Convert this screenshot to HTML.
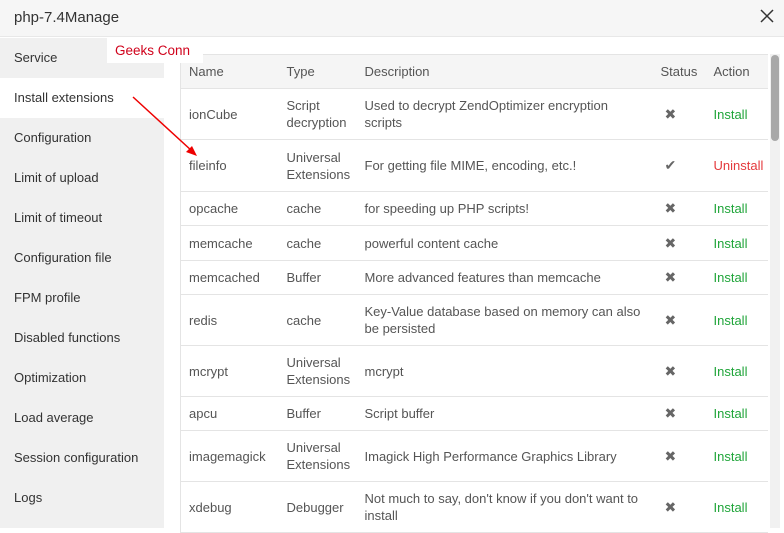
<!DOCTYPE html>
<html><head><style>
*{margin:0;padding:0;box-sizing:border-box}
body{width:784px;height:528px;overflow:hidden;background:#fff;font-family:"Liberation Sans",sans-serif;color:#333;position:relative}
.title{position:absolute;left:0;top:0;width:784px;height:37px;background:#f6f6f6;border-bottom:1px solid #e8e8e8;font-size:15px;line-height:36px;padding-left:14px;color:#333}
.close{position:absolute;right:10px;top:9px}
.side{position:absolute;left:0;top:38px;width:164px;height:490px;background:#f0f0f0}
.side div{height:40px;line-height:40px;padding-left:14px;font-size:13px;color:#333}
.side .on{background:#fff}
.tbl{position:absolute;left:180px;top:54px;width:588px;border-collapse:collapse;font-size:13px;color:#555}
.tbl td,.tbl th{border-bottom:1px solid #e4e4e4;text-align:left;font-weight:normal;padding:0 0 0 8px;line-height:17px;vertical-align:middle}
.tbl th{background:#f5f5f5;height:34px;color:#555;font-size:13px}
.tbl{border-left:1px solid #e4e4e4;border-top:1px solid #e4e4e4}
.g{color:#20a53a}.r{color:#e4393c}
.st{color:#666;font-size:14px;padding-left:12px!important}
.sb{position:absolute;left:770px;top:54px;width:10px;height:474px;background:#f1f1f1}
.sb div{width:8px;margin-left:1px;height:86px;background:#a8a8a8;border-radius:4px;margin-top:1px}
.wm{position:absolute;left:107px;top:38px;width:96px;height:25px;background:#fff;color:#d0021b;font-size:13.5px;line-height:26px;padding-left:8px}
</style></head><body>
<div class="title">php-7.4Manage</div>
<svg class="close" width="14" height="14" viewBox="0 0 14 14"><path d="M1 1L13 13M13 1L1 13" stroke="#333" stroke-width="1.5"/></svg>
<div class="side">
<div>Service</div><div class="on">Install extensions</div><div>Configuration</div><div>Limit of upload</div><div>Limit of timeout</div><div>Configuration file</div><div>FPM profile</div><div>Disabled functions</div><div>Optimization</div><div>Load average</div><div>Session configuration</div><div>Logs</div>
</div>
<table class="tbl">
<colgroup><col style="width:98px"><col style="width:78px"><col style="width:296px"><col style="width:53px"><col></colgroup>
<tr><th>Name</th><th>Type</th><th>Description</th><th>Status</th><th>Action</th></tr>
<tr style="height:51px"><td>ionCube</td><td>Script decryption</td><td>Used to decrypt ZendOptimizer encryption<br>scripts</td><td class="st">✖</td><td class="g">Install</td></tr>
<tr style="height:52px"><td>fileinfo</td><td>Universal Extensions</td><td>For getting file MIME, encoding, etc.!</td><td class="st">✔</td><td class="r">Uninstall</td></tr>
<tr style="height:34px"><td>opcache</td><td>cache</td><td>for speeding up PHP scripts!</td><td class="st">✖</td><td class="g">Install</td></tr>
<tr style="height:35px"><td>memcache</td><td>cache</td><td>powerful content cache</td><td class="st">✖</td><td class="g">Install</td></tr>
<tr style="height:34px"><td>memcached</td><td>Buffer</td><td>More advanced features than memcache</td><td class="st">✖</td><td class="g">Install</td></tr>
<tr style="height:51px"><td>redis</td><td>cache</td><td>Key-Value database based on memory can also be persisted</td><td class="st">✖</td><td class="g">Install</td></tr>
<tr style="height:51px"><td>mcrypt</td><td>Universal Extensions</td><td>mcrypt</td><td class="st">✖</td><td class="g">Install</td></tr>
<tr style="height:34px"><td>apcu</td><td>Buffer</td><td>Script buffer</td><td class="st">✖</td><td class="g">Install</td></tr>
<tr style="height:51px"><td>imagemagick</td><td>Universal Extensions</td><td>Imagick High Performance Graphics Library</td><td class="st">✖</td><td class="g">Install</td></tr>
<tr style="height:51px"><td>xdebug</td><td>Debugger</td><td>Not much to say, don't know if you don't want to install</td><td class="st">✖</td><td class="g">Install</td></tr>
</table>
<div class="sb"><div></div></div>
<div class="wm">Geeks Conn</div>
<svg style="position:absolute;left:0;top:0" width="784" height="528"><path d="M133 97L192 151" stroke="#e00" stroke-width="1.5"/><path d="M197 156L186 152L192 146Z" fill="#e00"/></svg>
</body></html>
